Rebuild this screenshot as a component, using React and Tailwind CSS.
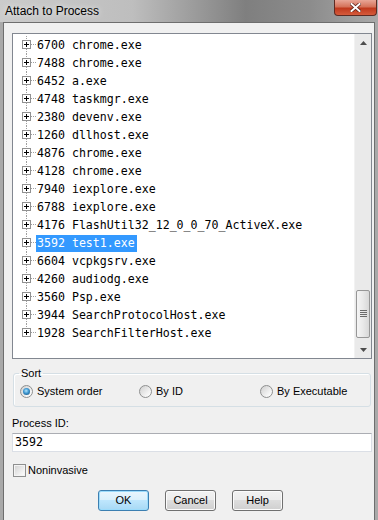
import React from 'react';

const processes = [
  ['6700', 'chrome.exe'],
  ['7488', 'chrome.exe'],
  ['6452', 'a.exe'],
  ['4748', 'taskmgr.exe'],
  ['2380', 'devenv.exe'],
  ['1260', 'dllhost.exe'],
  ['4876', 'chrome.exe'],
  ['4128', 'chrome.exe'],
  ['7940', 'iexplore.exe'],
  ['6788', 'iexplore.exe'],
  ['4176', 'FlashUtil32_12_0_0_70_ActiveX.exe'],
  ['3592', 'test1.exe'],
  ['6604', 'vcpkgsrv.exe'],
  ['4260', 'audiodg.exe'],
  ['3560', 'Psp.exe'],
  ['3944', 'SearchProtocolHost.exe'],
  ['1928', 'SearchFilterHost.exe'],
];

const SELECTED = '3592';

// tree connector + expand box for one row
const TreeGlyph = ({ last }) => (
  <svg width="23" height="18" className="shrink-0">
    <g stroke="#a0a0a0" strokeWidth="1" strokeDasharray="1 1" fill="none">
      <line x1="13.5" y1="0" x2="13.5" y2="4" />
      {!last && <line x1="13.5" y1="13" x2="13.5" y2="18" />}
      <line x1="18" y1="8.5" x2="23" y2="8.5" />
    </g>
    <rect x="9.5" y="4.5" width="8" height="8" fill="#fff" stroke="#919191" />
    <line x1="11" y1="8.5" x2="16" y2="8.5" stroke="#000" />
    <line x1="13.5" y1="6" x2="13.5" y2="11" stroke="#000" />
  </svg>
);

const Arrow = ({ down }) => (
  <svg width="7" height="4" viewBox="0 0 7 4">
    <polygon points={down ? '0,0 7,0 3.5,4' : '3.5,0 7,4 0,4'} fill="#4d4d4d" />
  </svg>
);

const Radio = ({ checked, label, className }) => (
  <div className={`flex items-center gap-[4px] ${className}`}>
    <div className="w-[13px] h-[13px] rounded-full border border-[#8e8f8f] bg-[linear-gradient(135deg,#cfcfcf_0%,#f4f4f4_70%,#ffffff_100%)] flex items-center justify-center shrink-0">
      {checked && (
        <div className="w-[7px] h-[7px] rounded-full bg-[radial-gradient(circle_at_45%_40%,#b3e6fd_0%,#3c95d0_45%,#17486d_100%)]" />
      )}
    </div>
    <span>{label}</span>
  </div>
);

const Button = ({ children, primary }) => (
  <button
    className={
      primary
        ? 'w-[51px] h-[21px] rounded-[3px] border border-[#3c7fb1] bg-[linear-gradient(to_bottom,#eaf6fd_0%,#d9f0fc_50%,#bee6fd_50%,#a7d9f5_100%)] shadow-[inset_0_0_0_1px_#9cdcfc] text-[11px]'
        : 'w-[51px] h-[21px] rounded-[3px] border border-[#707070] bg-[linear-gradient(to_bottom,#f2f2f2_0%,#ebebeb_50%,#dddddd_50%,#cfcfcf_100%)] shadow-[inset_0_0_0_1px_#fbfbfb] text-[11px]'
    }
  >
    {children}
  </button>
);

export default function App() {
  return (
    <div className="w-[378px] h-[520px] overflow-hidden flex flex-col bg-[#a9a9a9] font-['Liberation_Sans',Arial,sans-serif] text-[11px] text-black">
      {/* Title bar */}
      <div className="relative h-[22px] shrink-0 flex items-center pl-[5px] bg-[linear-gradient(to_right,#cbcbcb_0%,#bebebe_35%,#7f7f7f_65%,#8c8c8c_82%,#a9a9a9_100%)]">
        <span className="text-[12px] [text-shadow:0_0_6px_rgba(255,255,255,0.9)]">Attach to Process</span>
        <div className="absolute top-0 right-[1px] w-[43px] h-[16px] rounded-b-[4px] border border-t-0 border-[#5e2a22] bg-[linear-gradient(to_bottom,#e8a697_0%,#d5725a_45%,#c0391d_55%,#d55b3c_100%)] flex items-center justify-center">
          <svg width="11" height="9" viewBox="0 0 11 9">
            <g strokeLinecap="square">
              <line x1="1.5" y1="1" x2="9.5" y2="8" stroke="#5a1e14" strokeWidth="3.4" />
              <line x1="9.5" y1="1" x2="1.5" y2="8" stroke="#5a1e14" strokeWidth="3.4" />
              <line x1="1.5" y1="1" x2="9.5" y2="8" stroke="#fff" strokeWidth="2" />
              <line x1="9.5" y1="1" x2="1.5" y2="8" stroke="#fff" strokeWidth="2" />
            </g>
          </svg>
        </div>
      </div>

      {/* Dialog body */}
      <div className="flex-1 flex px-[3px]">
        <div className="flex-1 flex flex-col border-x border-t border-[#6e6e6e] bg-[#f0f0f0] pl-[8px] pr-[2px] pt-[10px]">
          {/* Process tree */}
          <div className="h-[326px] shrink-0 flex border border-[#828790] bg-white">
            <div className="flex-1 overflow-hidden pt-[2px] font-['DejaVu_Sans_Mono',monospace] text-[11.6px]">
              {processes.map(([pid, name], i) => (
                <div key={pid} className="h-[18px] flex items-center whitespace-nowrap">
                  <TreeGlyph last={i === processes.length - 1} />
                  <span
                    className={
                      pid === SELECTED
                        ? 'pl-[1px] pr-[2px] leading-[17px] bg-[#3399ff] text-white'
                        : 'pl-[1px] pr-[2px] leading-[17px]'
                    }
                  >
                    {pid} {name}
                  </span>
                </div>
              ))}
            </div>
            {/* Scrollbar */}
            <div className="w-[17px] flex flex-col bg-[#eaeaea] border-l border-[#f2f2f2]">
              <div className="h-[17px] flex items-center justify-center">
                <Arrow />
              </div>
              <div className="flex-1" />
              <div className="h-[48px] mx-[1px] mb-[3px] rounded-[2px] border border-[#979797] bg-[linear-gradient(to_right,#f5f5f5_0%,#e9e9e9_50%,#d8d8d8_100%)] flex items-center justify-center">
                <svg width="7" height="8" viewBox="0 0 7 8">
                  <g stroke="#6b6b6b">
                    <line x1="0" y1="0.5" x2="7" y2="0.5" />
                    <line x1="0" y1="2.5" x2="7" y2="2.5" />
                    <line x1="0" y1="4.5" x2="7" y2="4.5" />
                    <line x1="0" y1="6.5" x2="7" y2="6.5" />
                  </g>
                </svg>
              </div>
              <div className="h-[17px] flex items-center justify-center">
                <Arrow down />
              </div>
            </div>
          </div>

          {/* Sort group */}
          <fieldset className="mt-[8px] mx-[1px] border border-[#d5dfe5] rounded-[3px] shadow-[inset_1px_1px_0_#ffffff] pb-[8px]">
            <legend className="ml-[5px] px-[2px] leading-[13px]">Sort</legend>
            <div className="mt-[5px] h-[13px] flex items-center pl-[6px]">
              <Radio checked label="System order" className="w-[119px]" />
              <Radio label="By ID" className="w-[121px]" />
              <Radio label="By Executable" />
            </div>
          </fieldset>

          {/* Process ID */}
          <div className="mt-[10px] leading-[13px]">Process ID:</div>
          <div className="mt-[3px] h-[19px] flex items-center border border-[#dbdfe6] border-t-[#abadb3] bg-white pl-[2px] font-['DejaVu_Sans_Mono',monospace] text-[11.6px]">
            3592
          </div>

          {/* Noninvasive */}
          <div className="mt-[12px] h-[13px] flex items-center gap-[2px] pl-[1px]">
            <div className="w-[13px] h-[13px] border border-[#8e8f8f] bg-[linear-gradient(135deg,#d0d0d0_0%,#f2f2f2_70%,#ffffff_100%)] shadow-[inset_0_0_0_1px_#f4f4f4]" />
            <span>Noninvasive</span>
          </div>

          {/* Buttons */}
          <div className="mt-[13px] flex gap-[16px] ml-[86px]">
            <Button primary>OK</Button>
            <Button>Cancel</Button>
            <Button>Help</Button>
          </div>
        </div>
      </div>
    </div>
  );
}
